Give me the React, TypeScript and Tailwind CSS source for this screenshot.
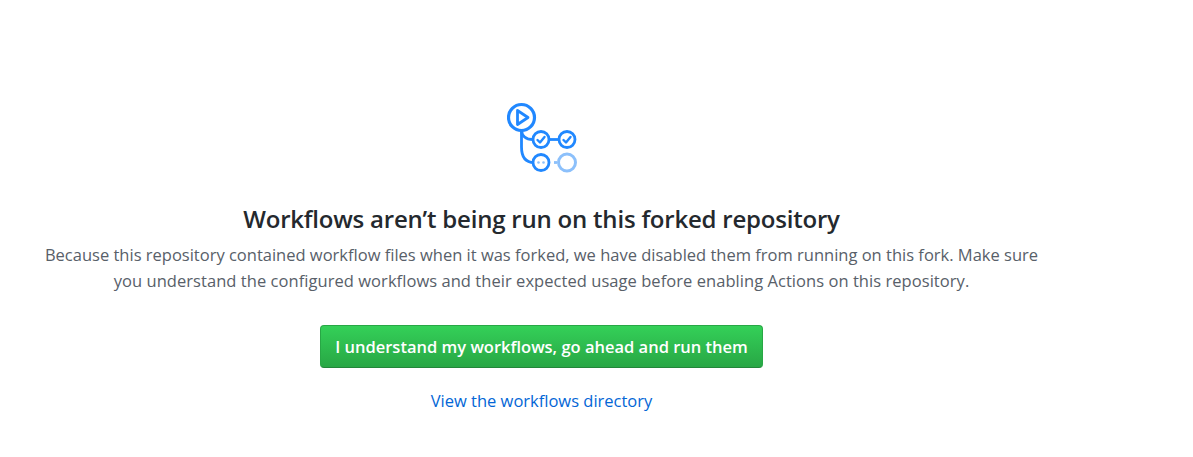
export default function App() {
  return (
    <div className="w-[1193px] h-[457px] bg-white overflow-hidden font-['Open_Sans','Noto_Sans',sans-serif]">
      <div className="w-[1083px] flex flex-col items-center text-center pt-[102px]">
        <svg width="72" height="72" viewBox="0 0 72 72" fill="none" className="ml-[3px]">
          <path d="M14.5 29 V45 Q14.5 60.5 27 60.5" stroke="#2188ff" strokeWidth="2.8" />
          <path d="M14.5 28 Q15 37.5 26 37.5" stroke="#2188ff" strokeWidth="2.8" />
          <circle cx="14.5" cy="15.5" r="13" stroke="#2188ff" strokeWidth="3.2" fill="white" />
          <path d="M10.5 8.5 L21 15.5 L10.5 22.5 Z" stroke="#2188ff" strokeWidth="2.8" strokeLinejoin="round" />
          <path d="M42 37.5 H52" stroke="#2188ff" strokeWidth="2.8" />
          <circle cx="34" cy="37.5" r="8" stroke="#2188ff" strokeWidth="2.8" />
          <path d="M30.5 38 L33 40.5 L37.5 35" stroke="#2188ff" strokeWidth="2.4" strokeLinecap="round" strokeLinejoin="round" />
          <circle cx="60" cy="37.5" r="8" stroke="#2188ff" strokeWidth="2.8" />
          <path d="M56.5 38 L59 40.5 L63.5 35" stroke="#2188ff" strokeWidth="2.4" strokeLinecap="round" strokeLinejoin="round" />
          <circle cx="34" cy="60.5" r="8" stroke="#2188ff" strokeWidth="2.8" />
          <circle cx="31.5" cy="60.5" r="1.3" fill="#8cc0fb" />
          <circle cx="36.5" cy="60.5" r="1.3" fill="#8cc0fb" />
          <path d="M47 60.5 H50" stroke="#8cc0fb" strokeWidth="2.8" />
          <circle cx="60" cy="60.5" r="8.5" stroke="#8cc0fb" strokeWidth="3" />
        </svg>
        <h1 className="mt-[27px] text-[24px] leading-[36px] font-semibold text-[#24292e] tracking-[-0.21px] whitespace-nowrap">Workflows aren’t being run on this forked repository</h1>
        <p className="mt-[5px] w-[1040px] text-[16.5px] leading-[26px] text-[#586069] whitespace-nowrap">
          Because this repository contained workflow files when it was forked, we have disabled them from running on this fork. Make sure<br />
          <span className="tracking-[0.05px]">you understand the configured workflows and their expected usage before enabling Actions on this repository.</span>
        </p>
        <button className="mt-[31px] w-[443px] h-[43px] pt-[2px] rounded-[4px] border border-[#28a745] border-b-[#22863a] bg-gradient-to-b from-[#34d058] to-[#28a745] text-white text-[16.5px] font-semibold whitespace-nowrap">
          I understand my workflows, go ahead and run them
        </button>
        <a href="#" className="mt-[20px] text-[16.5px] leading-[26px] text-[#0366d6]">View the workflows directory</a>
      </div>
    </div>
  );
}
